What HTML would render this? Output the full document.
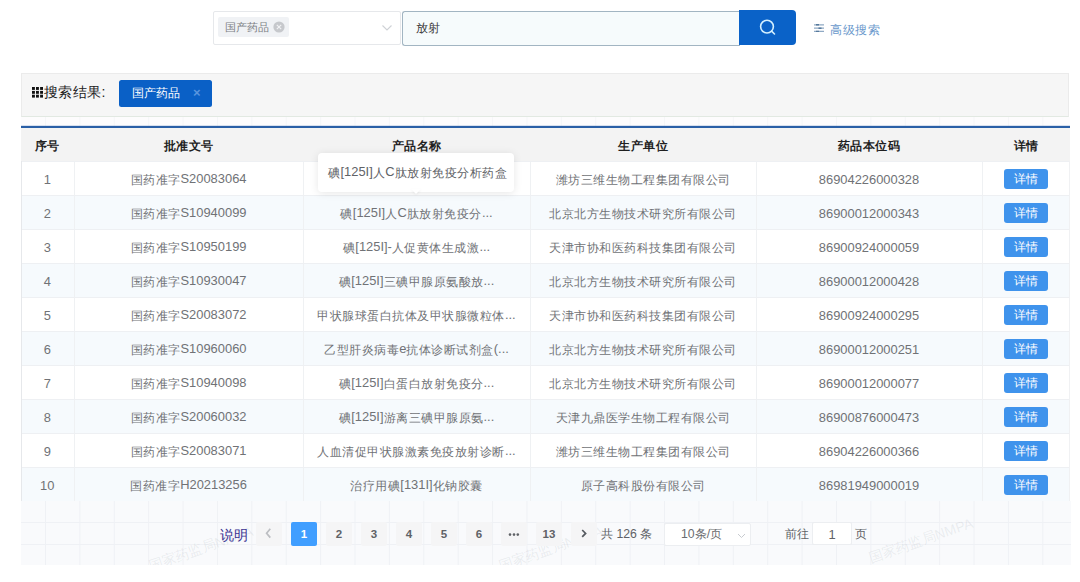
<!DOCTYPE html>
<html><head><meta charset="utf-8">
<style>
*{box-sizing:border-box;margin:0;padding:0}
html,body{width:1080px;height:582px;overflow:hidden;background:#fff;font-family:"Liberation Sans",sans-serif;color:#606266}
.abs{position:absolute}
.sel{left:213px;top:11px;width:188px;height:34px;border:1px solid #e6e8eb;border-radius:2px;background:#fff}
.stag{left:218px;top:17px;width:71px;height:20px;background:#f0f2f5;border-radius:2px;font-size:11px;color:#7c7f84;line-height:21px;padding-left:7px}
.inp{left:402px;top:11px;width:338px;height:35px;border:1px solid #a2b5c2;border-right:none;border-radius:3px 0 0 3px;background:#f6fbfc;font-size:12.25px;color:#3a3a3a;line-height:33px;padding-left:13px}
.btn{left:739px;top:10px;width:57px;height:35px;background:#0a62c8;border-radius:0 4px 4px 0}
.adv{left:830px;top:22px;font-size:12.25px;letter-spacing:.5px;color:#6a98cc;line-height:16px}
.res{left:21px;top:73px;width:1048px;height:44px;background:#f6f6f6;border:1px solid #ebebeb;border-bottom-color:#e2e9e2}
.rt{left:44px;top:82px;font-size:14px;letter-spacing:.35px;color:#222;line-height:20px}
.rtag{left:119px;top:80px;width:93px;height:26.5px;background:#0a60c6;border-radius:2.5px;color:#fff;font-size:12.25px;line-height:26px;padding-left:13px}
.rtag span{position:absolute;left:74px;top:0;color:#5a95de;font-size:13px;font-weight:bold}
.bline{left:21px;top:126px;width:1049px;height:2px;background:#2a5fa6;box-shadow:0 -0.5px 0.5px rgba(42,95,166,.35)}
table{position:absolute;left:21px;top:128px;width:1049px;border-collapse:collapse;table-layout:fixed}
td,th{font-size:12.25px;letter-spacing:0.5px;text-align:center;white-space:nowrap;overflow:hidden;border-bottom:1px solid #eef0f3;border-right:1px solid #eff1f3;padding:0}
th{height:33px;padding-top:4px;background:#f3f3f3;color:#1f1f1f;font-weight:bold;border-right-color:#f3f3f3}
td{height:34px;padding-top:4px;color:#707276;background:#fff}
tr.s td{background:#f6fafd}
td:last-child,th:last-child{border-right:none}
.db{display:inline-block;position:relative;top:-1.5px;width:44px;height:20px;background:#3f93ec;color:#fff;border-radius:3px;line-height:20px;font-size:12px}
.tip{left:318px;top:153px;width:196px;height:39px;background:#fff;border-radius:4px;box-shadow:0 1px 8px rgba(0,0,0,.10);font-size:12.25px;letter-spacing:.5px;color:#606266;line-height:39px;padding-left:10px}
.pband{left:21px;top:501px;width:1050px;height:64px;background-color:#f9fafc;background-image:linear-gradient(90deg,#eff1f5 1px,transparent 1px),linear-gradient(180deg,#eff1f5 1px,transparent 1px);background-size:34.4px 100%,100% 22px;background-position:24px 0,0 21px}
.pband{overflow:hidden}
.wm{position:absolute;font-size:14px;line-height:18px;color:rgba(120,125,135,.12);transform:rotate(-19deg);transform-origin:0 50%;white-space:nowrap}
.gband{left:21px;top:117px;width:1049px;height:9px;background-color:#fdfcfd;background-image:linear-gradient(90deg,#f5f6f8 1px,transparent 1px);background-size:34.4px 100%;background-position:24px 0}
.pg{top:522px;width:26px;height:24px;background:#f5f5f6;border-radius:2px;font-size:11.5px;font-weight:bold;color:#606266;text-align:center;line-height:24px}
.pg.a{background:#409eff;color:#fff}
.ptxt{font-size:12.25px;color:#606266;line-height:24px;top:522px}
.n{font-size:12.9px;letter-spacing:0;position:relative;top:-1px}
</style></head><body>
<!-- top search -->
<div class="abs sel"></div>
<div class="abs stag">国产药品<svg width="12" height="12" style="position:absolute;left:55px;top:3.5px"><circle cx="6" cy="6" r="5.6" fill="#c6c8cc"/><path d="M3.8 3.8L8.2 8.2M8.2 3.8L3.8 8.2" stroke="#f2f3f5" stroke-width="1.1"/></svg></div>
<svg class="abs" style="left:381px;top:24px" width="12" height="8"><path d="M1.5 1.5L6 6L10.5 1.5" fill="none" stroke="#cfd2d6" stroke-width="1.1"/></svg>
<div class="abs inp">放射</div>
<div class="abs btn">
<svg width="57" height="35" style="position:absolute;left:0;top:0"><circle cx="28" cy="16.6" r="6.4" fill="none" stroke="#d4f0ff" stroke-width="1.6"/><line x1="32.6" y1="21.2" x2="35.5" y2="24" stroke="#d4f0ff" stroke-width="1.6" stroke-linecap="round"/></svg>
</div>
<svg class="abs" style="left:814px;top:23px" width="10" height="10"><path d="M0 1.8H10M0 5.2H10M0 8.4H10" stroke="#8fa9c4" stroke-width="1.2"/><path d="M2 1.8H5M4.5 5.2H7.5M2 8.4H5" stroke="#56799c" stroke-width="1.4"/></svg>
<div class="abs adv">高级搜索</div>

<!-- results -->
<div class="abs res"></div>
<svg class="abs" style="left:31.5px;top:86.5px" width="12" height="11"><g fill="#111"><rect x="0.0" y="0.0" width="2.9" height="2.9"/><rect x="4.0" y="0.0" width="2.9" height="2.9"/><rect x="8.1" y="0.0" width="2.9" height="2.9"/><rect x="0.0" y="3.9" width="2.9" height="2.9"/><rect x="4.0" y="3.9" width="2.9" height="2.9"/><rect x="8.1" y="3.9" width="2.9" height="2.9"/><rect x="0.0" y="7.7" width="2.9" height="2.9"/><rect x="4.0" y="7.7" width="2.9" height="2.9"/><rect x="8.1" y="7.7" width="2.9" height="2.9"/></g></svg>
<div class="abs rt">搜索结果:</div>
<div class="abs rtag">国产药品<span>×</span></div>
<div class="abs gband"></div>
<div class="abs bline"></div>

<table>
<colgroup><col style="width:53px"><col style="width:229px"><col style="width:227px"><col style="width:226px"><col style="width:226px"><col style="width:88px"></colgroup>
<tr><th>序号</th><th>批准文号</th><th>产品名称</th><th>生产单位</th><th>药品本位码</th><th>详情</th></tr>
<tr><td><span class="n">1</span></td><td>国药准字<span class="n">S20083064</span></td><td>碘<span class="n">[125I]</span>人<span class="n">C</span>肽放射免疫分<span class="n">...</span></td><td>潍坊三维生物工程集团有限公司</td><td><span class="n">86904226000328</span></td><td><span class="db">详情</span></td></tr>
<tr class="s"><td><span class="n">2</span></td><td>国药准字<span class="n">S10940099</span></td><td>碘<span class="n">[125I]</span>人<span class="n">C</span>肽放射免疫分<span class="n">...</span></td><td>北京北方生物技术研究所有限公司</td><td><span class="n">86900012000343</span></td><td><span class="db">详情</span></td></tr>
<tr><td><span class="n">3</span></td><td>国药准字<span class="n">S10950199</span></td><td>碘<span class="n">[125I]-</span>人促黄体生成激<span class="n">...</span></td><td>天津市协和医药科技集团有限公司</td><td><span class="n">86900924000059</span></td><td><span class="db">详情</span></td></tr>
<tr class="s"><td><span class="n">4</span></td><td>国药准字<span class="n">S10930047</span></td><td>碘<span class="n">[125I]</span>三碘甲腺原氨酸放<span class="n">...</span></td><td>北京北方生物技术研究所有限公司</td><td><span class="n">86900012000428</span></td><td><span class="db">详情</span></td></tr>
<tr><td><span class="n">5</span></td><td>国药准字<span class="n">S20083072</span></td><td>甲状腺球蛋白抗体及甲状腺微粒体<span class="n">...</span></td><td>天津市协和医药科技集团有限公司</td><td><span class="n">86900924000295</span></td><td><span class="db">详情</span></td></tr>
<tr class="s"><td><span class="n">6</span></td><td>国药准字<span class="n">S10960060</span></td><td>乙型肝炎病毒<span class="n">e</span>抗体诊断试剂盒<span class="n">(...</span></td><td>北京北方生物技术研究所有限公司</td><td><span class="n">86900012000251</span></td><td><span class="db">详情</span></td></tr>
<tr><td><span class="n">7</span></td><td>国药准字<span class="n">S10940098</span></td><td>碘<span class="n">[125I]</span>白蛋白放射免疫分<span class="n">...</span></td><td>北京北方生物技术研究所有限公司</td><td><span class="n">86900012000077</span></td><td><span class="db">详情</span></td></tr>
<tr class="s"><td><span class="n">8</span></td><td>国药准字<span class="n">S20060032</span></td><td>碘<span class="n">[125I]</span>游离三碘甲腺原氨<span class="n">...</span></td><td>天津九鼎医学生物工程有限公司</td><td><span class="n">86900876000473</span></td><td><span class="db">详情</span></td></tr>
<tr><td><span class="n">9</span></td><td>国药准字<span class="n">S20083071</span></td><td>人血清促甲状腺激素免疫放射诊断<span class="n">...</span></td><td>潍坊三维生物工程集团有限公司</td><td><span class="n">86904226000366</span></td><td><span class="db">详情</span></td></tr>
<tr class="s"><td><span class="n">10</span></td><td>国药准字<span class="n">H20213256</span></td><td>治疗用碘<span class="n">[131I]</span>化钠胶囊</td><td>原子高科股份有限公司</td><td><span class="n">86981949000019</span></td><td><span class="db">详情</span></td></tr>
</table>

<div class="abs" style="left:21px;top:161px;width:1px;height:340px;background:#e6e8eb"></div>
<div class="abs" style="left:1069px;top:161px;width:1px;height:340px;background:#f0f1f3"></div>
<div class="abs tip">碘<span class="n">[125I]</span>人<span class="n">C</span>肽放射免疫分析药盒</div>
<div class="abs" style="left:411px;top:189px;width:0;height:0;border-left:5px solid transparent;border-right:5px solid transparent;border-top:5px solid #fff;filter:drop-shadow(0 1px 1px rgba(0,0,0,.06))"></div>

<!-- pagination -->
<div class="abs pband"><div class="wm" style="left:128px;top:56px">国家药监局NMPA</div><div class="wm" style="left:478px;top:56px">国家药监局NMPA</div><div class="wm" style="left:848px;top:48px">国家药监局NMPA</div></div>
<div class="abs" style="left:220px;top:525px;font-size:14px;color:#3a3292;line-height:20px">说明</div>
<div class="abs pg" style="left:256px"><svg width="26" height="24" style="position:absolute;left:0;top:0"><path d="M14.3 6.8L10.6 11.2L14.3 15.6" fill="none" stroke="#bcbec2" stroke-width="1.7"/></svg></div>
<div class="abs pg a" style="left:291px">1</div>
<div class="abs pg" style="left:326px">2</div>
<div class="abs pg" style="left:361px">3</div>
<div class="abs pg" style="left:396px">4</div>
<div class="abs pg" style="left:431px">5</div>
<div class="abs pg" style="left:466px">6</div>
<div class="abs pg" style="left:501px"><svg width="26" height="24" style="position:absolute;left:0;top:0"><g fill="#5f6266"><circle cx="9" cy="12.6" r="1.3"/><circle cx="13" cy="12.6" r="1.3"/><circle cx="16.8" cy="12.6" r="1.3"/></g></svg></div>
<div class="abs pg" style="left:536px">13</div>
<div class="abs pg" style="left:571px"><svg width="26" height="24" style="position:absolute;left:0;top:0"><path d="M11.2 8L14.6 11.4L11.2 14.8" fill="none" stroke="#555a60" stroke-width="1.7"/></svg></div>
<div class="abs ptxt" style="left:601px">共 126 条</div>
<div class="abs" style="left:664px;top:523px;width:87px;height:23px;border:1px solid #eceef1;border-radius:2px;background:#fff;font-size:12.25px;line-height:21px;padding-left:16px;color:#6a6c70">10条/页<svg width="10" height="6" style="position:absolute;left:72px;top:9px"><path d="M1 1L4.5 4.5L8 1" fill="none" stroke="#c8cbd0" stroke-width="1"/></svg></div>
<div class="abs ptxt" style="left:785px">前往</div>
<div class="abs" style="left:812px;top:522px;width:40px;height:23px;border:1px solid #eceef1;border-radius:2px;background:#fff;font-size:12.9px;line-height:23px;text-align:center;color:#606266">1</div>
<div class="abs ptxt" style="left:855px">页</div>
</body></html>
